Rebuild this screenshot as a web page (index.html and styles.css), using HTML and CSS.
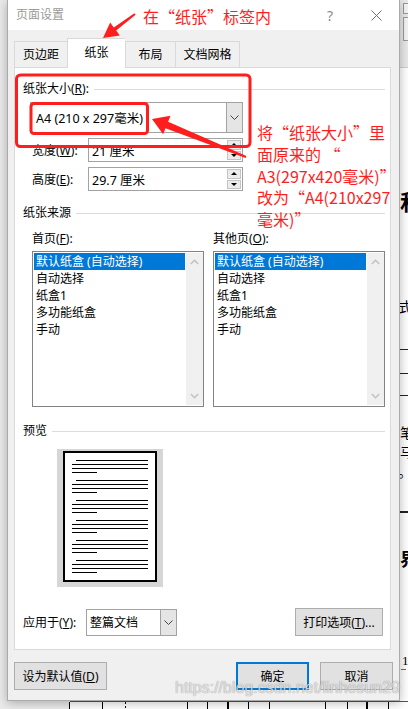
FILE: index.html
```html
<!DOCTYPE html>
<html lang="zh-CN">
<head>
<meta charset="utf-8">
<title>页面设置</title>
<link rel="stylesheet" href="styles.css">
</head>
<body>
<div class="screen">
  <div class="backdrop">
    <div class="bd-left"></div>
    <div class="bd-ribbon"><span class="bd-box bx1"></span><span class="bd-box bx2"></span></div>
    <span class="frag fr1">和</span>
    <span class="frag fr2">式</span>
    <i class="bd-line ln1"></i><i class="bd-line ln2"></i><i class="bd-line ln3"></i>
    <span class="frag fr3">笔</span>
    <span class="frag fr4">马</span>
    <span class="frag fr5">。</span>
    <i class="bd-line ln4"></i>
    <span class="frag fr6">界</span>
    <span class="frag fr7">1</span>
    <i class="bd-squig"></i>
    <div class="bd-bottom">
      <i class="vl" style="left:69px"></i><i class="vl" style="left:102px"></i><i class="vl dash" style="left:125px"></i>
      <i class="vl" style="left:187px"></i><i class="vl" style="left:207px"></i><i class="vl thick" style="left:227px"></i>
      <i class="vl" style="left:248px"></i><i class="vl" style="left:269px"></i><i class="vl" style="left:325px"></i>
      <i class="vl" style="left:347px"></i><i class="vl thick" style="left:366px"></i><i class="vl" style="left:388px"></i>
    </div>
  </div>

  <div class="dialog">
    <div class="titlebar">
      <span class="title">页面设置</span>
      <span class="tb-btn help">?</span>
      <span class="tb-btn close"><svg width="11" height="11" viewBox="0 0 11 11"><path d="M0.5 0.5L10.5 10.5M10.5 0.5L0.5 10.5" stroke="#707070" stroke-width="1" fill="none"/></svg></span>
    </div>
    <div class="dlg-body">
      <div class="tabs">
        <div class="tab t1">页边距</div>
        <div class="tab t2 active">纸张</div>
        <div class="tab t3">布局</div>
        <div class="tab t4">文档网格</div>
      </div>
      <div class="panel">
        <div class="group-head"><span>纸张大小(<u>R</u>):</span><i class="rule"></i></div>
        <div class="combo paper">
          <span class="combo-text">A4 (210 x 297毫米)</span>
          <span class="combo-btn"><svg width="9" height="5" viewBox="0 0 9 5"><path d="M0.5 0.5L4.5 4.5L8.5 0.5" stroke="#444" fill="none"/></svg></span>
        </div>
        <div class="dim-row">
          <span class="dim-label">宽度(<u>W</u>):</span>
          <div class="spin"><span class="spin-text">21 厘米</span><span class="spin-btns"><b class="sb"><i class="tri up"></i></b><b class="sb"><i class="tri down"></i></b></span></div>
        </div>
        <div class="dim-row">
          <span class="dim-label">高度(<u>E</u>):</span>
          <div class="spin"><span class="spin-text">29.7 厘米</span><span class="spin-btns"><b class="sb"><i class="tri up"></i></b><b class="sb"><i class="tri down"></i></b></span></div>
        </div>

        <div class="group-head src-head"><span>纸张来源</span><i class="rule"></i></div>
        <div class="src-grid">
          <div class="src-col">
            <div class="src-label">首页(<u>F</u>):</div>
            <div class="listbox">
              <div class="items">
                <div class="item sel">默认纸盒 (自动选择)</div>
                <div class="item">自动选择</div>
                <div class="item">纸盒1</div>
                <div class="item">多功能纸盒</div>
                <div class="item">手动</div>
              </div>
              <div class="vscroll">
                <svg width="9" height="6" viewBox="0 0 9 6"><path d="M0.8 5L4.5 1.3L8.2 5" stroke="#c2c2c2" stroke-width="1.6" fill="none"/></svg>
                <svg width="9" height="6" viewBox="0 0 9 6"><path d="M0.8 1L4.5 4.7L8.2 1" stroke="#c2c2c2" stroke-width="1.6" fill="none"/></svg>
              </div>
            </div>
          </div>
          <div class="src-col">
            <div class="src-label">其他页(<u>O</u>):</div>
            <div class="listbox">
              <div class="items">
                <div class="item sel">默认纸盒 (自动选择)</div>
                <div class="item">自动选择</div>
                <div class="item">纸盒1</div>
                <div class="item">多功能纸盒</div>
                <div class="item">手动</div>
              </div>
              <div class="vscroll">
                <svg width="9" height="6" viewBox="0 0 9 6"><path d="M0.8 5L4.5 1.3L8.2 5" stroke="#c2c2c2" stroke-width="1.6" fill="none"/></svg>
                <svg width="9" height="6" viewBox="0 0 9 6"><path d="M0.8 1L4.5 4.7L8.2 1" stroke="#c2c2c2" stroke-width="1.6" fill="none"/></svg>
              </div>
            </div>
          </div>
        </div>

        <div class="group-head prev-head"><span>预览</span><i class="rule"></i></div>
        <div class="preview">
          <div class="page">
            <svg width="90" height="127" viewBox="0 0 90 127">
              <g stroke="#000" stroke-width="1">
                <path d="M11 7.5H83M7 11.5H83M7 15.5H83M7 19.5H32"/>
                <path d="M11 27.5H83M7 31.5H83M7 35.5H83M7 39.5H32"/>
                <path d="M11 47.5H83M7 51.5H83M7 55.5H83M7 59.5H32"/>
                <path d="M11 67.5H83M7 71.5H83M7 75.5H83M7 79.5H32"/>
                <path d="M11 87.5H83M7 91.5H83M7 95.5H83M7 99.5H32"/>
                <path d="M11 107.5H83M7 111.5H83M7 115.5H83M7 119.5H32"/>
              </g>
            </svg>
          </div>
        </div>

        <div class="apply-row">
          <span class="apply-label">应用于(<u>Y</u>):</span>
          <div class="combo apply">
            <span class="combo-text">整篇文档</span>
            <span class="combo-btn"><svg width="9" height="5" viewBox="0 0 9 5"><path d="M0.5 0.5L4.5 4.5L8.5 0.5" stroke="#444" fill="none"/></svg></span>
          </div>
          <div class="btn print-btn">打印选项(<u>T</u>)...</div>
        </div>
      </div>
      <div class="btn-row">
        <div class="btn def-btn">设为默认值(<u>D</u>)</div>
        <div class="btn ok-btn">确定</div>
        <div class="btn cancel-btn">取消</div>
      </div>
    </div>
  </div>

  <svg class="annot" width="408" height="709" viewBox="0 0 408 709">
    <g fill="none" stroke="#ff1e1e" stroke-width="3">
      <rect x="68.5" y="41.5" width="57" height="25" rx="4"/>
      <rect x="16.5" y="75" width="233.5" height="71.5" rx="4"/>
      <rect x="31" y="103.5" width="116.5" height="30" rx="3"/>
    </g>
    <g fill="#ff1e1e">
      <polygon points="103,38 119.8,35.4 116.2,30.6 135.6,14.8 134.4,13.2 113.8,27.4 110.2,22.6"/>
      <polygon points="152,119 163.1,134.3 165.5,128.2 245.6,157.9 246.4,156.1 168.1,121.8 170.5,115.7"/>
    </g>
  </svg>
  <div class="note note-top">在“纸张”标签内</div>
  <div class="note note-side">将“纸张大小”里<br>面原来的 “<br>A3(297x420毫米)”<br>改为“A4(210x297<br>毫米)”</div>
  <div class="watermark">https://blog.csdn.net/linhesun29</div>
</div>
</body>
</html>
```

FILE: styles.css
```css
* { box-sizing: border-box; }

body {
  margin: 0;
  font-family: "Noto Sans", "Noto Sans CJK SC", sans-serif;
  font-size: 12px;
  color: #000;
}

.screen {
  position: relative;
  width: 408px;
  height: 709px;
  overflow: hidden;
  background: #fff;
}

/* ---------- background document (behind the dialog) ---------- */
.backdrop { position: absolute; inset: 0; }
.bd-left {
  position: absolute; left: 0; top: 0;
  width: 70px; height: 709px;
  background: #ebebeb;
}
.bd-ribbon {
  position: absolute; left: 400px; top: 0;
  width: 8px; height: 68px;
  background: #e9e9e9;
  border-bottom: 1px solid #cfcfcf;
}
.bd-box {
  position: absolute; left: 3px; width: 10px;
  border: 1px solid #9a9a9a; background: #f4f4f4;
}
.bx1 { top: 3px; height: 11px; }
.bx2 { top: 17px; height: 24px; }
.frag {
  position: absolute;
  font-family: "Noto Sans CJK SC", sans-serif;
  color: #000;
  line-height: 1;
}
.fr1 { left: 400px; top: 189px; font-size: 22px; font-weight: 700; }
.fr2 { left: 398px; top: 299px; font-size: 14px; }
.fr3 { left: 400px; top: 425px; font-size: 14px; }
.fr4 { left: 400px; top: 445px; font-size: 13px; }
.fr5 { left: 398px; top: 464px; font-size: 14px; }
.fr6 { left: 400px; top: 549px; font-size: 18px; font-weight: 700; }
.fr7 { left: 402px; top: 654px; font-size: 13px; font-family: "Liberation Serif", serif; }
.bd-line { position: absolute; left: 400px; width: 8px; height: 1px; background: #222; }
.ln1 { top: 349px; }
.ln2 { top: 373px; }
.ln3 { top: 395px; }
.ln4 { top: 511px; height: 2px; }
.bd-squig { position: absolute; left: 401px; top: 669px; width: 5px; height: 2px; border-top: 1px solid #e33; }
.bd-bottom {
  position: absolute; left: 70px; top: 701px;
  width: 338px; height: 8px;
  background: #fff;
  border-top: 1px solid #555;
}
.vl { position: absolute; top: 0; width: 1px; height: 8px; background: #000; }
.vl.thick { width: 2px; }
.vl.dash { background: repeating-linear-gradient(#000 0 2px, transparent 2px 4px); }
.bd-bottom .vl { margin-left: -70px; }

/* ---------- dialog window ---------- */
.dialog {
  position: absolute; left: 7px; top: 0;
  width: 393px; height: 701px;
  background: #f0f0f0;
  border: 1px solid #ababab;
  border-top: none;
  box-shadow: 0 2px 10px rgba(0, 0, 0, 0.28);
  display: flex;
  flex-direction: column;
}

.titlebar {
  flex: none;
  height: 30px;
  background: #fff;
  display: flex;
  align-items: center;
  padding-left: 8px;
}
.title { color: #9a9a9a; line-height: 16px; }
.tb-btn {
  width: 46px; height: 30px;
  display: flex; align-items: center; justify-content: center;
}
.help { margin-left: auto; color: #8a8a8a; font-size: 14px; font-family: "Noto Sans", sans-serif; }

.dlg-body {
  flex: 1;
  display: flex;
  flex-direction: column;
  padding: 8px 7px 0 6px;
}

/* tabs */
.tabs {
  display: flex;
  align-items: flex-end;
  height: 29px;
  position: relative;
  z-index: 1;
}
.tab {
  height: 26px;
  background: #f0f0f0;
  border: 1px solid #d9d9d9;
  border-bottom: none;
  border-right: none;
  display: flex;
  align-items: center;
  justify-content: center;
  line-height: 16px;
}
.t1 { width: 53px; }
.t2 { width: 58px; }
.t3 { width: 50px; }
.t4 { width: 65px; border-right: 1px solid #d9d9d9; }
.tab.active {
  height: 30px;
  margin-bottom: -1px;
  background: #fff;
  padding-bottom: 1px;
}

/* panel */
.panel {
  width: 377px;
  background: #fff;
  border: 1px solid #d9d9d9;
  padding: 0 5px 13px 8px;
}

.group-head {
  display: flex;
  align-items: center;
  height: 16px;
  line-height: 16px;
  margin-top: 13px;
}
.rule { flex: 1; height: 1px; background: #dcdcdc; margin-left: 5px; }
.src-head { margin-top: 14px; }
.prev-head { margin-top: 16px; }

/* combo box */
.combo {
  display: flex;
  background: #fff;
  border: 1px solid #a2a2a2;
}
.combo-text { flex: 1; display: flex; align-items: center; padding-left: 5px; white-space: nowrap; }
.combo-btn {
  width: 16px;
  background: #e5e5e5;
  border-left: 1px solid #a2a2a2;
  display: flex; align-items: center; justify-content: center;
}
.paper { margin: 5px 0 0 7px; width: 213px; height: 31px; }
.paper .combo-text { font-size: 12.5px; }

/* spin fields */
.dim-row { display: flex; align-items: center; margin: 5px 0 0 7px; height: 24px; }
.dim-label { width: 58px; padding-left: 2px; }
.spin {
  width: 155px; height: 24px;
  display: flex;
  border: 1px solid #a2a2a2;
  background: #fff;
}
.spin-text { flex: 1; display: flex; align-items: center; padding-left: 3px; font-size: 12.5px; }
.spin-btns { width: 15px; display: flex; flex-direction: column; padding: 1px 1px 1px 0; gap: 1px; }
.sb {
  flex: 1;
  background: #ececec;
  border: 1px solid #c4c4c4;
  display: flex; align-items: center; justify-content: center;
}
.tri { width: 0; height: 0; border-left: 3px solid transparent; border-right: 3px solid transparent; }
.tri.up { border-bottom: 3px solid #000; }
.tri.down { border-top: 3px solid #000; }

/* paper source */
.src-grid {
  display: grid;
  grid-template-columns: 172px 172px;
  column-gap: 9px;
  margin: 10px 0 0 9px;
}
.src-label { height: 16px; line-height: 16px; }
.listbox {
  margin-top: 4px;
  height: 156px;
  border: 1px solid #838383;
  background: #fff;
  display: flex;
  padding: 1px 0 1px 1px;
}
.items { flex: 1; margin-right: 1px; }
.item { height: 17px; line-height: 17px; padding-left: 2px; white-space: nowrap; }
.item.sel { background: #0078d7; color: #fff; }
.vscroll {
  width: 17px;
  background: #f0f0f0;
  display: flex;
  flex-direction: column;
  align-items: center;
  justify-content: space-between;
  padding: 6px 0 6px;
}

/* preview */
.preview {
  margin: 10px 0 0 34px;
  width: 106px; height: 138px;
  background: #d6d6d6;
  padding: 2px 6px 5px 6px;
}
.page { height: 100%; background: #fff; border: 2px solid #000; }
.page svg { display: block; }

/* apply row */
.apply-row { display: flex; align-items: center; margin-top: 21px; height: 28px; }
.apply-label { width: 63px; }
.apply { width: 91px; height: 27px; }
.apply .combo-text { padding-left: 3px; }

/* buttons */
.btn {
  height: 28px;
  background: #e1e1e1;
  border: 1px solid #adadad;
  display: flex; align-items: center; justify-content: center;
  white-space: nowrap;
}
.print-btn { width: 88px; margin-left: auto; margin-right: 2px; }
.btn-row { display: flex; margin-top: 12px; }
.def-btn { width: 93px; }
.ok-btn { width: 73px; margin-left: auto; border: 2px solid #0078d7; }
.cancel-btn { width: 73px; margin-left: 11px; margin-right: -1px; }

/* ---------- annotations drawn on top of the screenshot ---------- */
.annot { position: absolute; left: 0; top: 0; pointer-events: none; }
.note {
  position: absolute;
  font-family: "Noto Sans CJK SC", sans-serif;
  color: #ff1e1e;
  font-size: 16px;
  white-space: nowrap;
}
.note-top { left: 143px; top: 6px; line-height: 20px; }
.note-side { left: 257px; top: 122px; line-height: 21.8px; }

.watermark {
  position: absolute;
  left: 175px; top: 678px;
  font-family: "Liberation Sans", sans-serif;
  font-size: 16px;
  line-height: 20px;
  color: rgba(255, 255, 255, 0.72);
  text-shadow: 0 0 1px rgba(0, 0, 0, 0.35), 0 0 1px rgba(0, 0, 0, 0.2);
  white-space: nowrap;
}
```
